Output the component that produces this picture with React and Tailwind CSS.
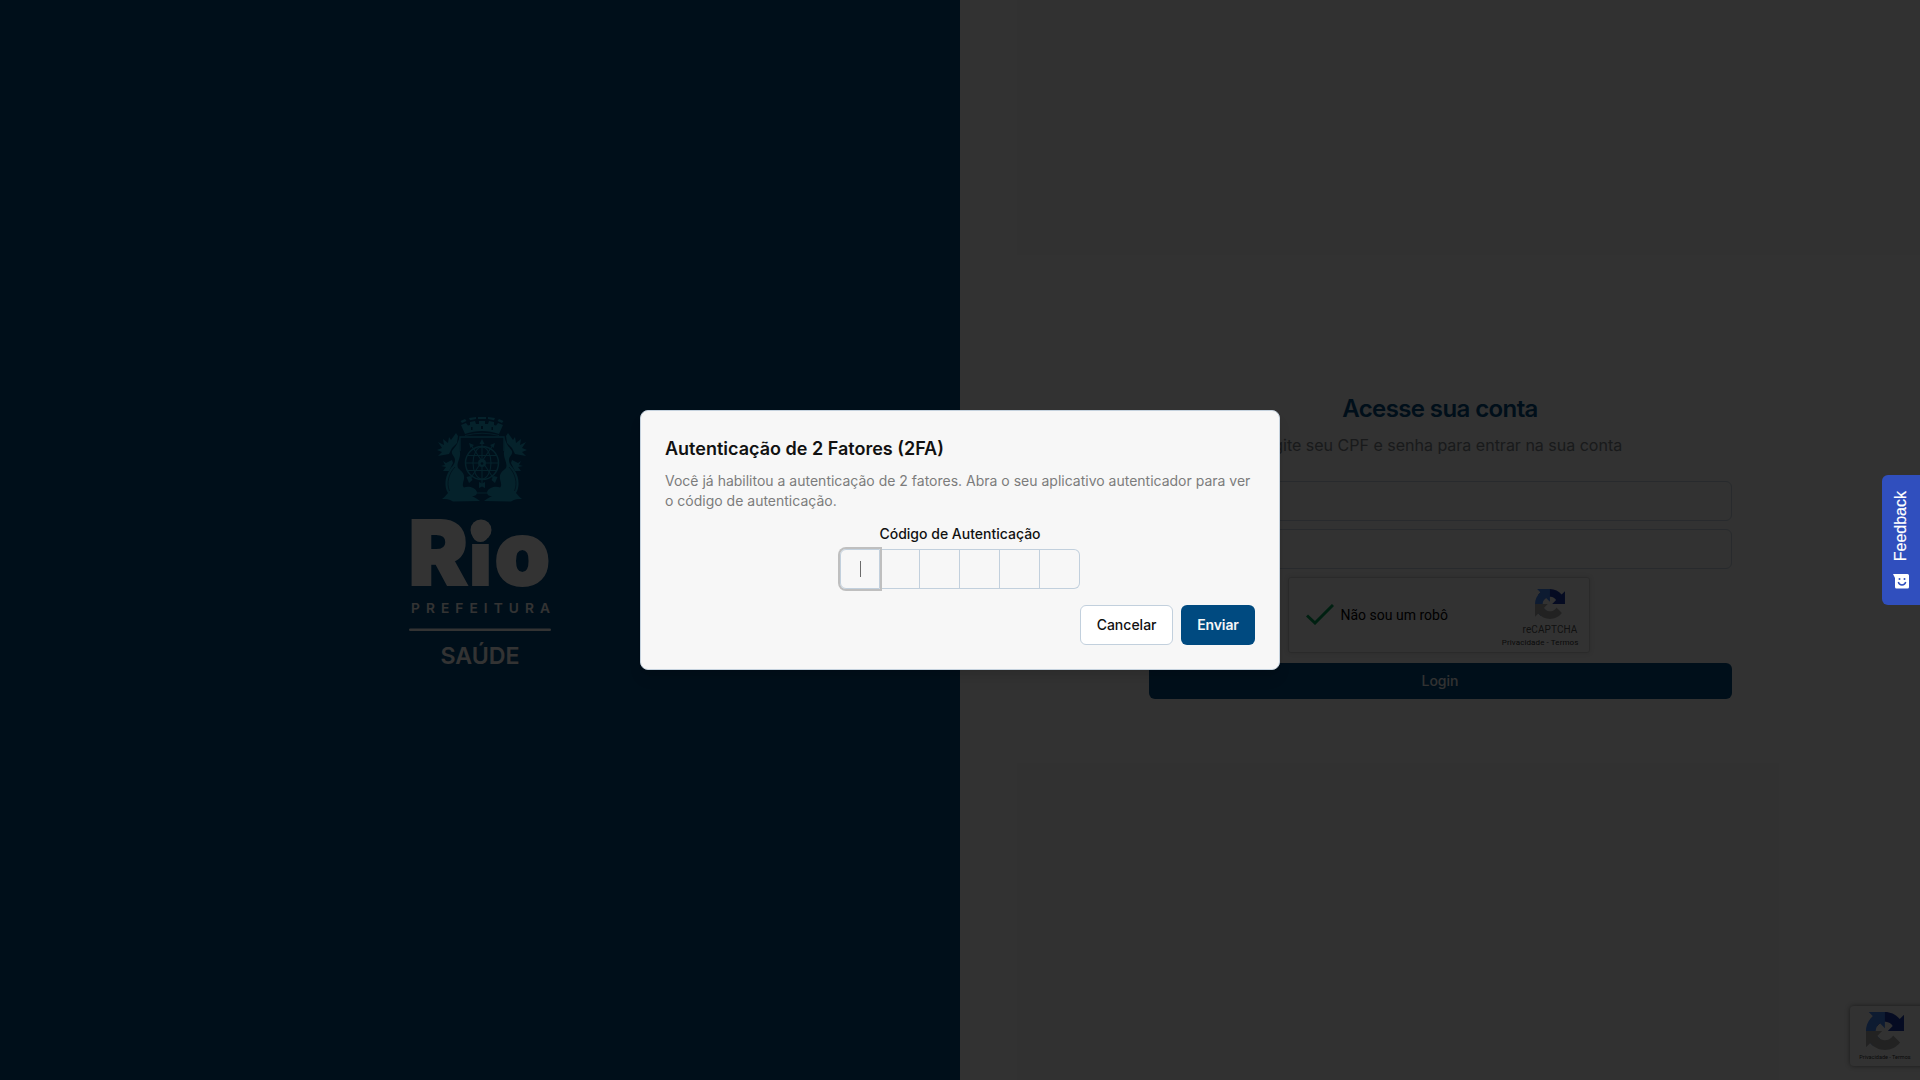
const inter = "font-['Inter',sans-serif]";

function Crest() {
  const side = (
    <g>
      <path d="M19 16 L21 19 L20 26 L15 31 L12 37 L1 39 L5 35 L0 33 L5 31 L1 25 L7 28 L6 22 L11 26 L12 20 L14 23 Z" />
      <path d="M6 44 L9 46 L15 43 L16 46 L12 54 L6 54 L9 50 L4 49 L8 48 Z" />
      <path d="M22.500 20 C23 28 22 31 23 35 C24 41 19 46 21 51 C24 54 28 56 27 62 C26 66 25 69 27 70.500 C31 69 38 70 40 75 C40 79 37 79 35 79 C38 81 41 82 43 84 L16 84.500 C12 82 9 82 5 82 C8 80 9 78 11 76 C7 70 8 60 12 54 C14 50 18 48 18 43 C18 39 14 38 15 34 C18 30 21 27 22.500 20 Z" />
      <path d="M12.500 74 C9 66 12 56 18 50" fill="none" stroke="#004a80" strokeWidth="0.7" />
    </g>
  );
  return (
    <svg viewBox="0 0 90 86" className="ml-[3px] h-[86px] w-[90px]" fill="#19a8d6">
      <path d="M23.500 4 L28 2 L29.500 4 L25 6Z M32 1 L39 0 L39 2 L33 3.200Z M41 0 H49 V2 H41Z M51 0 L58 1 L57 3.200 L51 2Z M62 2 L66.500 4 L65 6 L60.500 4Z" />
      <path fillRule="evenodd" d="M24 8 L29 6 L31 8.500 L33 8 L33 5 L38 4 L39 7 L42 7 V4 H48 V7 L51 7 L52 4 L57 5 L57 8 L59 8.500 L61 6 L66 8 L62 17 C51 13 39 13 28 17 Z M34 10 v3 h1.500 v-3z M44 9 v3 h2 v-3z M54.500 10 v3 h1.500 v-3z" />
      <path d="M28 18.500 Q45 14 62 18.500" fill="none" stroke="#19a8d6" strokeWidth="0.8" />
      <path d="M23 34 V20 H67 V34" fill="none" stroke="#19a8d6" strokeWidth="1.300" />
      {side}
      <g transform="translate(90 0) scale(-1 1)">{side}</g>
      <g fill="none" stroke="#19a8d6" strokeWidth="1.100">
        <circle cx="45" cy="46" r="16.500" strokeWidth="1.500" />
        <ellipse cx="45" cy="46" rx="9" ry="16" />
        <path d="M28 46H62M31 38.500H59M31 53.500H59M45 25V67M34 28L57 62M56 28L33 62M39 76H51" />
      </g>
      <path d="M45 22l2.500 5h-5zM32 26l5 2-3.500 3zM58 26l-5 2 3.500 3zM42 65l3 1.500 3-1.500v6l-3-1.500-3 1.500zM29.500 60l4-1 2 4-3.500 3zM60.500 60l-4-1-2 4 3.500 3z" />
      <circle cx="45" cy="46" r="4" />
      <circle cx="45" cy="46.500" r="1.300" fill="#004a80" />
    </svg>
  );
}

function Logo() {
  return (
    <div className="flex w-[152px] flex-col items-center pt-2">
      <Crest />
      <svg viewBox="-4 0 152 168" className="h-[168px] w-[152px] overflow-visible" fill="#fff" fontFamily="Inter, sans-serif">
        <text y="81.500" fontWeight="900" fontSize="89" stroke="#fff" strokeWidth="2">
          <tspan x="0.500">R</tspan>
          <tspan x="61.500" fontSize="74">i</tspan>
          <tspan x="86.500" fontSize="89">o</tspan>
        </text>
        <circle cx="73" cy="27" r="10.500" />
        <text x="3" y="110" fontWeight="600" fontSize="13.700" textLength="139">PREFEITURA</text>
        <rect x="1" y="125.500" width="142" height="2.600" rx="1.300" />
        <text x="32.500" y="161" fontWeight="600" fontSize="23.500" textLength="79" lengthAdjust="spacingAndGlyphs">SAÚDE</text>
      </svg>
    </div>
  );
}

function RecaptchaMark({ className }) {
  return (
    <svg viewBox="0 0 64 64" className={className}>
      <path fill="#1c3aa9" d="M64 31.955l-.033-1.370V4.687l-7.160 7.160C50.948 4.674 42.033.093 32.050.093c-10.400 0-19.622 4.960-25.458 12.640l11.736 11.860a15.550 15.550 0 0 1 4.754-5.334c2.050-1.600 4.952-2.906 8.968-2.906.485 0 .860.057 1.135.163 4.976.393 9.288 3.140 11.828 7.124l-8.307 8.307L64 31.953" />
      <path fill="#4285f4" d="M31.862.094l-1.370.033H4.594l7.160 7.160C4.580 13.147 0 22.060 0 32.046c0 10.400 4.960 19.622 12.640 25.458L24.500 45.768a15.550 15.550 0 0 1-5.334-4.754c-1.600-2.050-2.906-4.952-2.906-8.968 0-.485.057-.860.163-1.135.393-4.976 3.140-9.288 7.124-11.828l8.307 8.307L31.860.095" />
      <path fill="#ababab" d="M.001 32.045l.033 1.370v25.898l7.160-7.160c5.860 7.173 14.774 11.754 24.760 11.754 10.400 0 19.622-4.960 25.458-12.640l-11.736-11.860a15.550 15.550 0 0 1-4.754 5.334c-2.050 1.600-4.952 2.906-8.968 2.906-.485 0-.860-.057-1.135-.163-4.976-.393-9.288-3.140-11.828-7.124l8.307-8.307-29.297.040" />
    </svg>
  );
}

function LoginForm() {
  return (
    <div className="flex w-[583px] flex-col">
      <h1 className="text-center text-2xl leading-8 font-semibold tracking-tight text-[#004a80]">Acesse sua conta</h1>
      <p className="mt-2 text-center text-base leading-6 text-[#7c8489]">Digite seu CPF e senha para entrar na sua conta</p>
      <div className="mt-6 h-10 rounded-md border border-[#c5d2de]" />
      <div className="mt-2 h-10 rounded-md border border-[#c5d2de]" />
      <div className="mt-2 mr-[3px] flex h-[76px] w-[302px] items-center self-center rounded-[3px] border border-[#d3d3d3] bg-[#f9f9f9] font-[Roboto,sans-serif] shadow-[0_0_4px_1px_rgba(0,0,0,0.08)]">
        <svg viewBox="0 0 28 21" className="ml-[17px] h-[21px] w-7 shrink-0" fill="none" stroke="#009e55" strokeWidth="3">
          <path d="M1 11.500 L9 19 L27 1" />
        </svg>
        <span className="ml-[7px] text-sm text-black">Não sou um robô</span>
        <div className="mr-2.5 ml-auto flex w-20 flex-col items-end pt-2">
          <RecaptchaMark className="mr-[14px] h-[30px] w-[30px]" />
          <span className="mt-[5px] mr-px text-[10px] leading-3 tracking-[0.1px] text-[#555]">reCAPTCHA</span>
          <span className="mt-px text-[8px] leading-3 tracking-[0.1px] whitespace-nowrap text-[#333]">Privacidade - Termos</span>
        </div>
      </div>
      <div className="mt-2.5 flex h-9 items-center justify-center rounded-md bg-[#004a80] text-sm font-medium text-[#f7f7f7]">Login</div>
    </div>
  );
}

function CodeSlots() {
  return (
    <div className="flex">
      <div className="z-10 flex size-10 items-center justify-center rounded-l-md border border-[#c2d0dd] ring-2 ring-[#bfbfbf]">
        <div className="h-4 w-px bg-[#6b6b6b]" />
      </div>
      {[1, 2, 3, 4].map((n) => (
        <div key={n} className="size-10 border-y border-r border-[#c2d0dd]" />
      ))}
      <div className="size-10 rounded-r-md border-y border-r border-[#c2d0dd]" />
    </div>
  );
}

function TwoFactorDialog() {
  return (
    <div className="flex w-[640px] flex-col rounded-lg border border-[#c5d2de] bg-[#f7f7f7] p-6 text-[#111] shadow-lg">
      <h2 className="text-lg leading-7 font-semibold">Autenticação de 2 Fatores (2FA)</h2>
      <p className="mt-2 text-sm leading-5 text-[#7c7c7c]">
        Você já habilitou a autenticação de 2 fatores. Abra o seu aplicativo autenticador para ver o código de autenticação.
      </p>
      <div className="mt-4 flex flex-col items-center gap-2">
        <span className="text-sm leading-[14px] font-medium">Código de Autenticação</span>
        <CodeSlots />
      </div>
      <div className="mt-4 flex justify-end gap-2 text-sm">
        <button className="h-10 rounded-md border border-[#c2d0dd] bg-white px-[15.500px] font-medium">Cancelar</button>
        <button className="h-10 w-[74px] rounded-md bg-[#004a80] font-semibold tracking-[-0.010em] text-[#f7f7f7]">Enviar</button>
      </div>
    </div>
  );
}

function FeedbackTab() {
  return (
    <div className="absolute top-[475px] right-0 flex h-[130px] w-[38px] flex-col items-center rounded-l-md bg-[#304fbe] pt-4 text-white">
      <span className="rotate-180 font-['Liberation_Sans',sans-serif] text-base leading-5 [writing-mode:vertical-rl] [-webkit-text-stroke:0.15px_white]">Feedback</span>
      <svg viewBox="0 0 16 15" className="mt-[13px] h-[15px] w-4">
        <path fill="#fff" d="M0 0 H14.500 Q16 0 16 1.500 V13 Q16 14.500 14.500 14.500 H3.500 Q2 14.500 2 13 V4 Z" />
        <path d="M5.300 8 A3.800 3.800 0 0 0 12.700 8" fill="none" stroke="#304fbe" strokeWidth="1.400" />
        <circle cx="6.500" cy="5" r="1" fill="#304fbe" />
        <circle cx="11.500" cy="5" r="1" fill="#304fbe" />
      </svg>
    </div>
  );
}

export default function App() {
  return (
    <div className={`relative h-screen w-screen overflow-hidden bg-[#f7f7f7] ${inter}`}>
      <div className="grid h-full grid-cols-2">
        <div className="flex items-center justify-center bg-[#004a80]">
          <Logo />
        </div>
        <div className="flex items-center justify-center pt-[11px]">
          <LoginForm />
        </div>
      </div>
      <div className="absolute right-[-186px] bottom-[14px] h-[60px] w-[256px] rounded-sm bg-[#f9f9f9] shadow-[0_0_5px_gray]">
        <div className="flex w-[70px] flex-col items-center pt-[6px]">
          <RecaptchaMark className="h-[38px] w-[38px]" />
          <span className="mt-[2px] font-[Roboto,sans-serif] text-[5.500px] leading-[10px] whitespace-nowrap text-[#333]">Privacidade - Termos</span>
        </div>
      </div>
      <div className="absolute inset-0 flex items-center justify-center bg-black/80">
        <TwoFactorDialog />
      </div>
      <FeedbackTab />
    </div>
  );
}
